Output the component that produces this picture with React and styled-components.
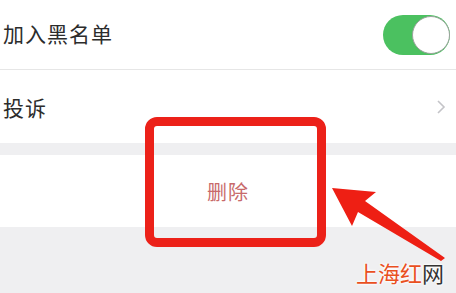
import React from 'react';
import styled, { createGlobalStyle } from 'styled-components';

const GlobalStyle = createGlobalStyle`
  html, body {
    margin: 0;
    padding: 0;
    background: #efeff1;
  }
`;

const Page = styled.div`
  position: relative;
  width: 456px;
  height: 293px;
  overflow: hidden;
  background: #efeff1;
  font-family: 'Noto Sans CJK SC', 'Noto Sans', sans-serif;
`;

const Group = styled.section`
  background: #ffffff;
  margin-top: ${(p) => p.$gap || 0}px;
`;

const Row = styled.div`
  display: flex;
  align-items: center;
  justify-content: space-between;
  height: ${(p) => p.$height}px;
  padding: 0 6px 0 3px;
  border-top: ${(p) => (p.$divider ? '1px solid #e6e6e6' : 'none')};
  box-sizing: border-box;
`;

const Label = styled.span`
  font-size: 21px;
  color: #2c2c2c;
  letter-spacing: 1px;
  margin-top: ${(p) => p.$shift || 0}px;
`;

const Switch = styled.div`
  width: 67px;
  height: 40px;
  border-radius: 20px;
  background: #4bc160;
  display: flex;
  justify-content: flex-end;
  align-items: center;
`;

const Knob = styled.div`
  width: 38px;
  height: 38px;
  border-radius: 50%;
  background: #ffffff;
  border: 1px solid #9aa39c;
  box-sizing: border-box;
`;

const Chevron = styled.svg`
  width: 10px;
  height: 16px;
  margin-right: 4px;
`;

const DeleteRow = styled.div`
  display: flex;
  align-items: center;
  justify-content: center;
  height: 72px;
  font-size: 20px;
  color: #c86a6a;
  letter-spacing: 1px;
`;

const Highlight = styled.div`
  position: absolute;
  left: 145px;
  top: 117px;
  width: 181px;
  height: 130px;
  border: 9px solid #ec2119;
  border-radius: 12px;
  box-sizing: border-box;
`;

const Arrow = styled.svg`
  position: absolute;
  left: 320px;
  top: 170px;
  width: 136px;
  height: 100px;
`;

const Watermark = styled.div`
  position: absolute;
  left: 356px;
  top: 258px;
  font-size: 22px;
  line-height: 28px;
  font-family: 'Noto Sans CJK SC', sans-serif;
  text-shadow: 0 0 3px #fff, 0 0 3px #fff, 0 0 2px #fff;
`;

const Mark = styled.span`
  color: ${(p) => p.$color};
`;

export default function App() {
  return (
    <Page>
      <GlobalStyle />
      <Group>
        <Row $height={69}>
          <Label $shift={-3}>加入黑名单</Label>
          <Switch>
            <Knob />
          </Switch>
        </Row>
        <Row $height={74} $divider>
          <Label>投诉</Label>
          <Chevron viewBox="0 0 10 16">
            <path d="M2 2 L8 8 L2 14" fill="none" stroke="#c4c4c8" strokeWidth="1.6" />
          </Chevron>
        </Row>
      </Group>
      <Group $gap={12}>
        <DeleteRow>删除</DeleteRow>
      </Group>
      <Highlight />
      <Arrow viewBox="0 0 136 100">
        <polygon
          points="12,18 56,22 45,31 125,88 121,91 38,42 32,56"
          fill="#ee1f14"
        />
      </Arrow>
      <Watermark>
        <Mark $color="#e9501f">上海红</Mark>
        <Mark $color="#333">网</Mark>
      </Watermark>
    </Page>
  );
}
